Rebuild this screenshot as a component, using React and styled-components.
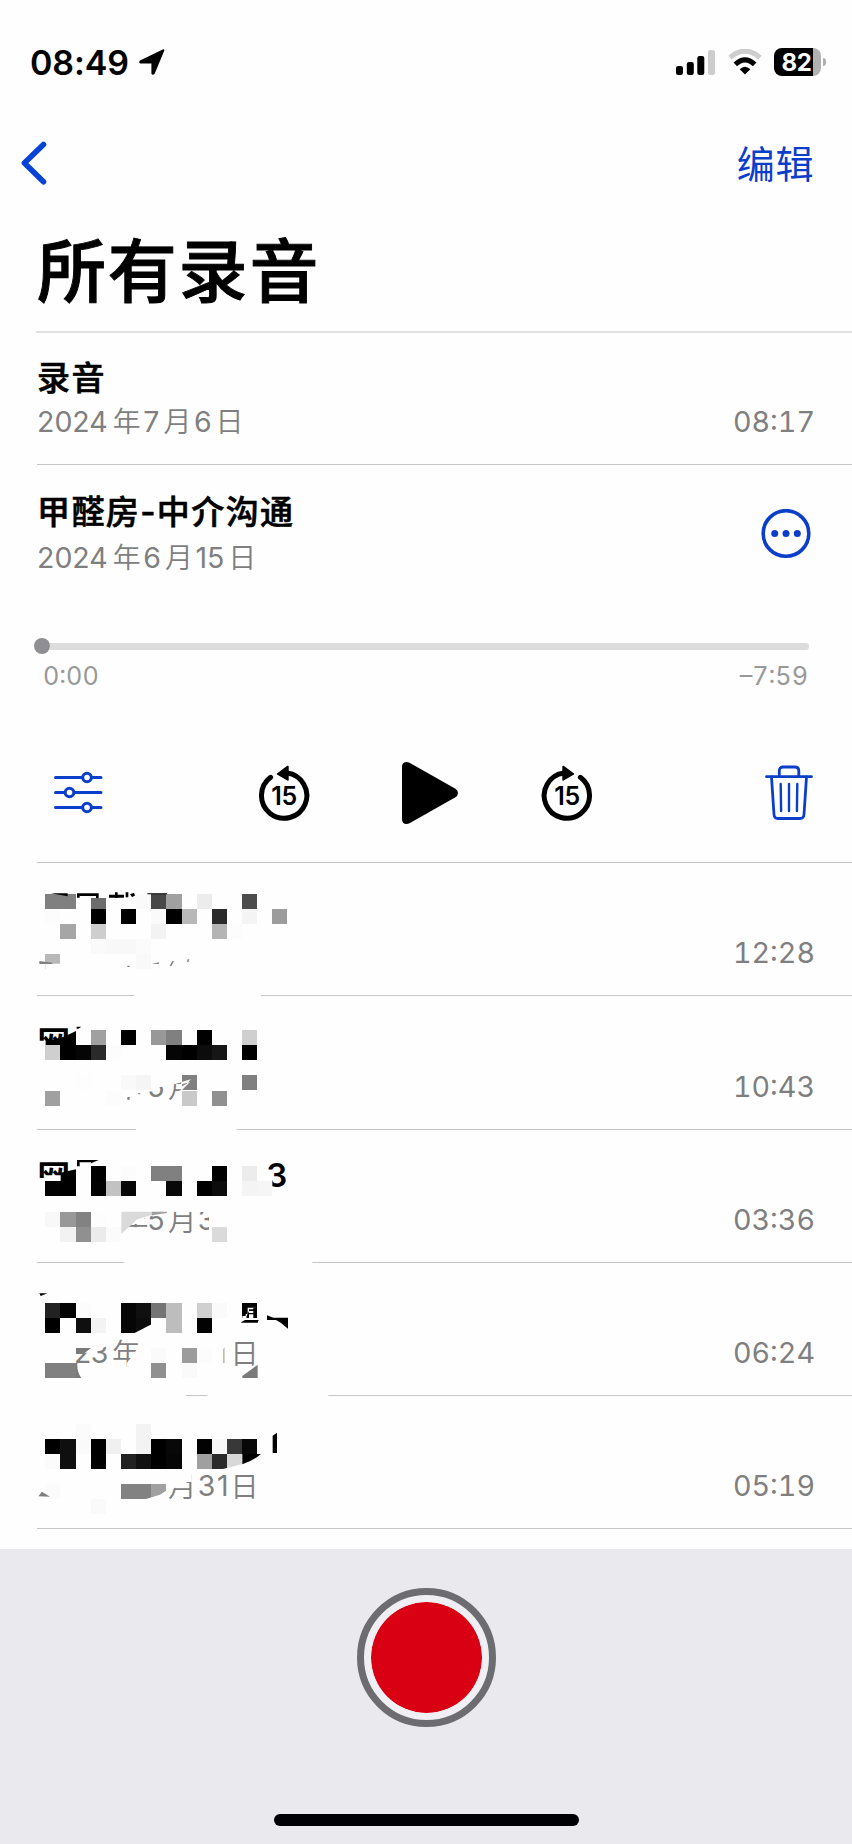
import React from 'react';
import styled, { createGlobalStyle } from 'styled-components';

const BLUE = '#0b3fca';
const GREY = '#7f7f7f';

const GlobalStyle = createGlobalStyle`
  * {
    box-sizing: border-box;
  }
  body {
    margin: 0;
    background-color: #fefefe;
    font-family: Inter, 'Noto Sans CJK SC', sans-serif;
    color: #000000;
  }
  svg {
    display: block;
    flex: none;
  }
`;

const Screen = styled.div`
  display: flex;
  flex-direction: column;
  width: 852px;
  height: 1844px;
  overflow: hidden;
`;

const StatusBar = styled.div`
  display: flex;
  align-items: center;
  height: 124px;
  padding: 0 26px 0 30px;
`;

const Clock = styled.div`
  font-size: 34px;
  font-weight: 560;
  width: 108px;
  letter-spacing: -0.1px;
`;

const StatusIcons = styled.div`
  display: flex;
  align-items: center;
  gap: 12.5px;
  margin-left: auto;
`;

const Battery = styled.div`
  display: flex;
  align-items: center;
  gap: 2px;
`;

const BatteryBody = styled.div`
  width: 47px;
  height: 28px;
  padding-left: 7.5px;
  border-radius: 8px;
  background: linear-gradient(to right, #000000 39px, #b1b1b1 39px);
  color: #ffffff;
  font-size: 24px;
  font-weight: 700;
  line-height: 29px;
  letter-spacing: -0.4px;
`;

const BatteryTip = styled.div`
  width: 3px;
  height: 8px;
  border-radius: 0 4px 4px 0;
  background-color: #b1b1b1;
`;

const NavBar = styled.div`
  display: flex;
  align-items: center;
  justify-content: space-between;
  height: 78px;
  padding: 0 38px 0 19px;
`;

const EditButton = styled.button`
  border: none;
  background: none;
  padding: 1px 0 0;
  font-family: inherit;
  font-size: 38px;
  line-height: 56px;
  letter-spacing: 0.6px;
  color: ${BLUE};
`;

const PageTitle = styled.h1`
  height: 129px;
  margin: 0;
  padding: 20px 0 0 37px;
  font-size: 69px;
  line-height: 100px;
  font-weight: 500;
  -webkit-text-stroke: 0.9px #000000;
  letter-spacing: 1.8px;
`;

const List = styled.div`
  padding-left: 37px;
  border-top: 2px solid transparent;
  border-image: linear-gradient(to right, transparent 37px, #e0e1e0 37px) 1;
`;

const Row = styled.div`
  position: relative;
  display: flex;
  align-items: flex-end;
  justify-content: space-between;
  height: ${p => p.$height || 133.25}px;
  padding: 0 37px 22px 0;
  border-bottom: 1px solid #c6c6c6;
`;

const Name = styled.div`
  font-size: 33px;
  line-height: 44px;
  font-weight: 500;
  -webkit-text-stroke: 0.6px #000000;
  letter-spacing: 1.4px;
`;

const DateText = styled.div`
  display: flex;
  align-items: center;
  font-size: 28.5px;
  line-height: 40px;
  margin-top: ${p => p.$gap || 2}px;
  color: ${GREY};
`;

const Numeral = styled.span`
  margin: 0 ${p => (p.$first ? 5 : 4)}px 0 ${p => (p.$first ? 0 : 2.5)}px;
`;

const Cjk = styled.span`
  font-size: 28px;
  font-weight: 350;
`;

const Duration = styled.div`
  margin-left: auto;
  font-size: 28.7px;
  line-height: 40px;
  font-variant-numeric: tabular-nums;
  color: ${GREY};
`;

const Player = styled.div`
  height: 398px;
  padding: 25px 38px 0 0;
  border-bottom: 1px solid #c6c6c6;
`;

const PlayerHead = styled.div`
  display: flex;
  justify-content: space-between;
  align-items: center;
  height: 88px;
  padding-right: 3px;
`;

const Track = styled.div`
  display: flex;
  align-items: center;
  height: 16px;
  margin: 60px 5px 0 -3px;
`;

const Knob = styled.div`
  width: 16px;
  height: 16px;
  border-radius: 50%;
  background-color: #8e8e93;
`;

const Line = styled.div`
  flex: 1;
  height: 7px;
  border-radius: 0 4px 4px 0;
  background-color: #dcdcdc;
`;

const Times = styled.div`
  display: flex;
  justify-content: space-between;
  margin: 5px 6px 0 6px;
  font-size: 25.2px;
  line-height: 34px;
  font-variant-numeric: tabular-nums;
  color: #999999;
`;

const Controls = styled.div`
  display: grid;
  grid-template-columns: 52px 1fr 49px;
  align-items: center;
  height: 70px;
  margin-top: 65px;
  padding-left: 16px;
`;

const Transport = styled.div`
  display: flex;
  align-items: center;
  justify-content: center;
  gap: 83.5px;
  padding-right: 19px;
`;

const Cover = styled.svg`
  position: absolute;
  left: -17px;
  top: 0;
`;

const Footer = styled.div`
  display: flex;
  flex-direction: column;
  align-items: center;
  flex: 1;
  margin-top: 20px;
  padding-top: 39px;
  background-color: #eae9ee;
`;

const RecordButton = styled.button`
  width: 139px;
  height: 139px;
  padding: 7px;
  border: 7px solid #6d6d71;
  border-radius: 50%;
  background: #d90013 content-box;
  box-shadow: inset 0 0 0 7px #f0eff4;
`;

const HomeIndicator = styled.div`
  width: 305px;
  height: 12px;
  margin: auto 0 18px;
  border-radius: 6px;
  background-color: #000004;
`;

const LocationIcon = () => (
  <svg width="28" height="28" viewBox="0 0 28 28">
    <path d="M2 12.400 24.800 1.500q2-.6 1.300 1.500L16.800 25.400q-2 2.800-3.400 0V15.600H3q-3-.6-1-3.200z" />
  </svg>
);

const SignalIcon = () => (
  <svg width="39" height="25" viewBox="0 0 39 25">
    <rect x="0" y="16" width="7" height="9" rx="2.200" />
    <rect x="10.800" y="12" width="7" height="13" rx="2.200" />
    <rect x="21.300" y="6" width="7" height="19" rx="2.200" />
    <rect x="32" y="0" width="7" height="25" rx="2.200" fill="#cdcdcd" />
  </svg>
);

const WifiIcon = () => (
  <svg width="34" height="26" viewBox="0 0 34 26">
    <path d="M2 8.600Q17-4.400 32 8.600" fill="none" stroke="#cdcdcd" strokeWidth="5" />
    <path d="M7.300 15.400Q17 6.200 26.700 15.400" fill="none" stroke="#000" strokeWidth="5" />
    <path d="M11.700 20.300Q17 15.200 22.300 20.300L17 25.500z" />
  </svg>
);

const BackIcon = () => (
  <svg width="28" height="46" viewBox="0 0 28 46">
    <path d="M24.500 4.500 5.400 23 24.500 41.700" fill="none" stroke="#0743d6" strokeWidth="5.600" strokeLinecap="round" strokeLinejoin="round" />
  </svg>
);

const MoreIcon = () => (
  <svg width="50" height="50" viewBox="0 .5 50 50" fill={BLUE}>
    <circle cx="25" cy="25" r="22.800" fill="none" stroke={BLUE} strokeWidth="3.600" />
    <circle cx="13.700" cy="25" r="3.500" />
    <circle cx="25" cy="25" r="3.500" />
    <circle cx="36.300" cy="25" r="3.500" />
  </svg>
);

const OptionsIcon = () => (
  <svg width="50" height="44" viewBox="0 0 50 44" fill="#fefefe" stroke={BLUE} strokeWidth="3" strokeLinecap="round">
    <path d="M2.500 6.500H48M2.500 21.500H48M2.500 36.500H48" />
    <circle cx="34" cy="6.500" r="4.300" />
    <circle cx="16.500" cy="21.500" r="4.300" />
    <circle cx="34" cy="36.500" r="4.300" />
  </svg>
);

const SkipIcon = ({ forward }) => (
  <svg width="52" height="60" viewBox="0 1.500 52 60">
    <g transform={forward ? 'matrix(-1 0 0 1 52 0)' : undefined}>
      <path d="M12.600 15.800A22.700 22.700 0 1 0 29 11.500" fill="none" stroke="#000" strokeWidth="5" strokeLinecap="round" />
      <path d="M19 12 29.300 4.300q1.400-.6 1.400 1V18.300q0 1.500-1.400.8L19 13q-.8-.5 0-1z" />
    </g>
    <text x="26" y="43.500" textAnchor="middle" fontSize="25" fontWeight="600" letterSpacing="-0.3">15</text>
  </svg>
);

const PlayIcon = () => (
  <svg width="64" height="64" viewBox="-7 0 64 64">
    <path d="M1 6Q1 1 5.500 1q1.500 0 3 .8L54 27.500q3 1.700 3 4.500t-3 4.500L8.500 62.200q-1.500.8-3 .8Q1 63 1 58z" />
  </svg>
);

const TrashIcon = () => (
  <svg width="48" height="56" viewBox="0 0 48 56" fill="none" stroke={BLUE} strokeWidth="2.800" strokeLinecap="round" strokeLinejoin="round">
    <path d="M1.500 11.700H46.500M14.300 11V6q0-4 4-4h11.500q4 0 4 4v5" />
    <path d="M6.500 12 9 49.500q.3 4 4 4h22q3.700 0 4-4L41.500 12" />
    <path d="M15.700 19l.4 27M24 19v27M32.300 19l-.4 27" strokeWidth="2.400" />
  </svg>
);

const COLUMN = 45.4;

// The cover of a censored row: text remnants, scribbled-out areas, then pixel blocks.
// Units are thirds of a pixel; each line of blocks is [y, { column: colour }].
const covers = [
  {
    originY: -21,
    gaps: [[343, 723]],
    lines: [
      [71, { 0: '#808080', 1: '#808080', 3: '#6c6c6c', 6: '#fafafa', 7: '#484848', 8: '#a0a0a0', 10: '#ececec', 13: '#4c4c4c' }],
      [117, { 0: '#fcfcfc', 3: '#000', 5: '#000', 7: '#fafafa', 8: '#000', 9: '#b8b8b8', 11: '#2a2a2a', 13: '#f4f4f4', 15: '#9c9c9c' }],
      [162, { 1: '#a6a6a6', 3: '#cecece', 7: '#f3f3f3', 11: '#b4b4b4', 12: '#fcfcfc' }],
      [207, { 3: '#fafafa', 4: '#f8f8f8', 5: '#f8f8f8', 6: '#fbfbfb' }],
      [252, { 0: '#b8b8b8', 6: '#f9f9f9' }],
    ],
    over: [
      ['#fefefe', 'M213 70H260V84H213zM100 281 124 281V300H76V280z'],
      ['#000', 'M92 70H143V79zM171 70H236V84H228V78H179V83H171zM267 74H312V83H267zM285 67H293V84H285zM317 67H325V82H317zM330 73 342 68 345 77 336 81zM382 70H441V73H382z'],
      [GREY, 'M58 273 97 278V282H58zM322 287H329V291H322zM395 281 418 277 416 282zM457 273H462L454 288H449zM503 268H508L505 276H501z'],
    ],
  },
  {
    originY: 378,
    gaps: [[348, 650]],
    texts: [
      ['网', 52, 556, true],
      ['5', 382, 681],
      ['月', 444, 684],
    ],
    under: 'M50 512H78V580H50zM76 525H170V580H76zM376 600H441V651H376zM450 610 515 610V628L463 643 450 640zM483 640H540V700H450L470 665 483 660z',
    lines: [
      [480, { 3: '#a0a0a0', 5: '#000', 7: '#989898', 8: '#808080', 10: '#000', 13: '#cfcfcf' }],
      [525, { 0: '#cfcfcf', 1: '#000', 2: '#050505', 3: '#2a2a2a', 4: '#fcfcfc', 8: '#050505', 9: '#000', 10: '#0c0c0c', 11: '#161616', 13: '#000' }],
      [616, { 2: '#fdfdfd', 5: '#f9f9f9', 6: '#f5f5f5', 9: '#808080', 13: '#808080' }],
      [662, { 0: '#a0a0a0', 4: '#fcfcfc', 9: '#c9c9c9', 11: '#909090' }],
    ],
    over: [
      ['#000', 'M77 510 105 508 132 500 168 483V525H77zM170 470H184L175 476H170z'],
      ['#fefefe', 'M484 650 500 641 513 628 484 636zM486 643 510 636 486 660z'],
      [GREY, 'M322 681H329V689H322zM354 670H361V673H354z'],
    ],
  },
  {
    originY: 0,
    gaps: [[313, 877]],
    texts: [
      ['网', 52, 176, true],
      ['3', 739, 171, true],
      ['年', 300, 303],
      ['5', 382, 300],
      ['月', 444, 303],
      ['3', 533, 300],
    ],
    under: 'M50 144H78V205H50zM76 136H170V205H76zM738 124H757V180H738zM300 215H440V246L395 258 362 270V282H334L300 310zM290 240H320V330H290zM440 215H575V246H440zM567 240H585V310H567zM334 292H364V320H334z',
    lines: [
      [109, { 3: '#000', 5: '#fcfcfc', 7: '#808080', 8: '#808080', 11: '#000', 13: '#ececec' }],
      [154, { 0: '#020202', 1: '#000', 3: '#020202', 4: '#c2c2c2', 5: '#060606', 8: '#080808', 10: '#000', 11: '#0c0c0c', 13: '#f4f4f4', 14: '#f6f6f6' }],
      [245, { 0: '#f8f8f8', 1: '#989898', 2: '#828282', 3: '#fdfdfd' }],
      [291, { 1: '#f2f2f2', 2: '#909090', 3: '#ebebeb', 4: '#fbfbfb', 11: '#dadada' }],
    ],
    over: [
      ['#000', 'M122 128 168 118V155H122zM171 90H236L213 100V97H179V109H171z'],
      ['#dadada', 'M304 245H395V255L352 268 304 312z'],
      ['#a0a0a0', 'M395 245H441V249L395 256z'],
    ],
  },
  {
    originY: 399,
    gaps: [[0, 498], [562, 925]],
    texts: [
      ['2', 162, 699],
      ['3', 212, 699],
      ['年', 276, 702],
      ['1', 591, 699],
      ['日', 631, 702],
    ],
    under: 'M150 630H213V668H150zM150 630H168V710H150zM210 620H260V648L235 662H210zM360 645 335 680 320 700V710H360zM588 630H625L605 666H588zM613 640H625V702H613zM700 704H720V714H700z',
    lines: [
      [518, { 0: '#222', 1: '#050505', 2: '#fcfcfc', 5: '#060606', 6: '#101010', 7: '#747474', 8: '#bdbdbd', 10: '#d0d0d0', 11: '#fafafa', 13: '#000' }],
      [563, { 0: '#000', 2: '#0f0f0f', 3: '#f3f3f3', 5: '#060606', 6: '#0c0c0c', 8: '#bdbdbd', 10: '#020202' }],
      [654, { 7: '#fafafa', 9: '#9c9c9c', 10: '#fcfcfc' }],
      [699, { 0: '#808080', 1: '#808080', 7: '#909090', 9: '#fafafa' }],
    ],
    over: [
      ['#fefefe', 'M344 609 396 582V610H344zM667 558H677V552H683V533H707V564H667z'],
      ['#000', 'M687 538H703V543H687zM686 549H703V553H686zM680 558 687 543V564H679zM700 533H708V564H700z'],
      ['#000', 'M58 490H82L62 498zM664 576 675 570H716L713 578H664zM741 556 760 563H804V596L782 578 768 570H741z'],
      ['#7a7a7a', 'M168 654H213L190 672H168zM168 699H172Q170 725 184 744H168zM667 738 713 704V744H667z'],
    ],
  },
  {
    originY: 18,
    gaps: [],
    texts: [
      ['月', 444, 322],
      ['3', 533, 319],
      ['1', 591, 319],
      ['日', 631, 322],
    ],
    under: 'M440 245H515V276H502L480 290 456 296H440z',
    lines: [
      [102, { 2: '#fbfbfb', 6: '#f3f3f3' }],
      [147, { 0: '#000', 1: '#0f0f0f', 2: '#fafafa', 3: '#000', 4: '#f0f0f0', 6: '#f3f3f3', 7: '#000', 8: '#080808', 10: '#020202', 11: '#f7f7f7', 12: '#383838', 13: '#080808' }],
      [192, { 0: '#fbfbfb', 1: '#0f0f0f', 3: '#000', 5: '#222', 6: '#111', 7: '#000', 8: '#060606', 10: '#a0a0a0', 11: '#2a2a2a', 12: '#d8d8d8' }],
      [282, { 0: '#fbfbfb', 5: '#828282', 6: '#828282', 7: '#a0a0a0' }],
      [328, { 3: '#fafafa' }],
    ],
    over: [
      ['#000', 'M667 192H723Q700 212 667 223zM758 137 771 128V189H758z'],
      ['#fefefe', 'M606 238 668 222V240H606zM368 330 400 320 420 314 442 300V331H368z'],
      [GREY, 'M55 319 66 305 73 310 90 320z'],
    ],
  },
];

const RedactedText = ({ cover }) => (
  <Cover width="320" height="134" viewBox={`0 ${cover.originY} 960 402`}>
    {cover.gaps.map(([from, to]) => (
      <rect key={from} x={from} y={cover.originY + 390} width={to - from} height="12" fill="#fefefe" />
    ))}
    {cover.texts && cover.texts.map(([text, x, y, bold]) => (
      <text
        key={x}
        x={x}
        y={y}
        fontSize={bold ? 99 : 85.5}
        fontWeight={bold ? 600 : text > '9' ? 350 : 400}
        fill={bold ? '#000' : GREY}
      >
        {text}
      </text>
    ))}
    <path d={cover.under} fill="#fefefe" />
    <g shapeRendering="crispEdges">
      {cover.lines.map(([y, cells]) => Object.keys(cells).map(column => (
        <rect key={`${y}-${column}`} x={76 + column * COLUMN} y={y} width={COLUMN} height={COLUMN} fill={cells[column]} />
      )))}
    </g>
    {cover.over.map(([fill, d]) => (
      <path key={d} d={d} fill={fill} />
    ))}
  </Cover>
);

const RecordingDate = ({ value, gap }) => (
  <DateText $gap={gap}>
    {value.split(/(\d+)/).filter(Boolean).map((part, i) => (
      /\d/.test(part)
        ? <Numeral key={i} $first={i === 0}>{part}</Numeral>
        : <Cjk key={i}>{part}</Cjk>
    ))}
  </DateText>
);

const durations = ['12:28', '10:43', '03:36', '06:24', '05:19'];

const App = () => (
  <>
    <GlobalStyle />
    <Screen>
      <StatusBar>
        <Clock>08:49</Clock>
        <LocationIcon />
        <StatusIcons>
          <SignalIcon />
          <WifiIcon />
          <Battery>
            <BatteryBody>82</BatteryBody>
            <BatteryTip />
          </Battery>
        </StatusIcons>
      </StatusBar>
      <NavBar>
        <BackIcon />
        <EditButton>编辑</EditButton>
      </NavBar>
      <PageTitle>所有录音</PageTitle>
      <List>
        <Row $height={132}>
          <div>
            <Name>录音</Name>
            <RecordingDate value="2024年7月6日" />
          </div>
          <Duration>08:17</Duration>
        </Row>
        <Player>
          <PlayerHead>
            <div>
              <Name>甲醛房-中介沟通</Name>
              <RecordingDate value="2024年6月15日" gap={4} />
            </div>
            <MoreIcon />
          </PlayerHead>
          <Track>
            <Knob />
            <Line />
          </Track>
          <Times>
            <span>0:00</span>
            <span>–7:59</span>
          </Times>
          <Controls>
            <OptionsIcon />
            <Transport>
              <SkipIcon />
              <PlayIcon />
              <SkipIcon forward />
            </Transport>
            <TrashIcon />
          </Controls>
        </Player>
        {durations.map((duration, i) => (
          <Row key={duration}>
            <RedactedText cover={covers[i]} />
            <Duration>{duration}</Duration>
          </Row>
        ))}
      </List>
      <Footer>
        <RecordButton aria-label="录音" />
        <HomeIndicator />
      </Footer>
    </Screen>
  </>
);

export default App;
